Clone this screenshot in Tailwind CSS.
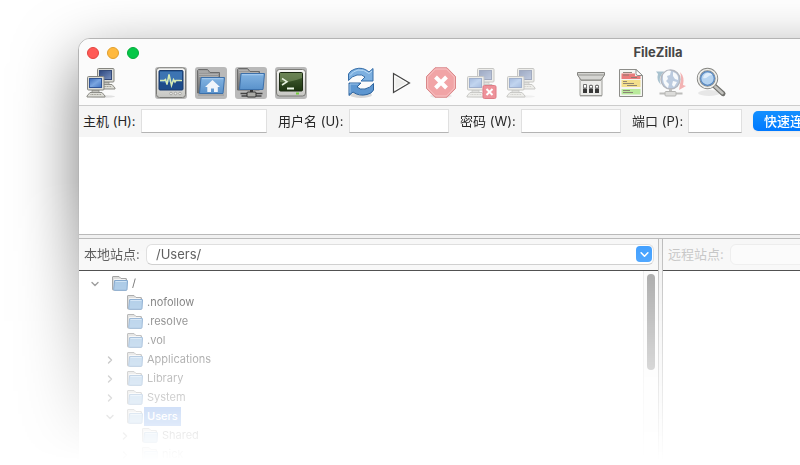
<!DOCTYPE html>
<html lang="zh-CN">
  <head>
    <meta charset="UTF-8" />
    <meta name="viewport" content="width=device-width, initial-scale=1.0" />
    <title>FileZilla</title>
    <script src="https://cdn.jsdelivr.net/npm/@tailwindcss/browser@4"></script>
  </head>

  <body class="bg-white font-['Inter','Noto_Sans_CJK_SC',sans-serif] text-[13px] text-[#262626]">
    <!-- ========== Shared icon parts ========== -->
    <svg class="absolute w-0 h-0" aria-hidden="true">
      <defs>
        <linearGradient id="screen" x1="0" y1="0" x2="1" y2="1">
          <stop offset="0" stop-color="#3a69b8" />
          <stop offset="0.5" stop-color="#7ba6e0" />
          <stop offset="1" stop-color="#3d70c0" />
        </linearGradient>
        <linearGradient id="screenDark" x1="0" y1="0" x2="1" y2="1">
          <stop offset="0" stop-color="#2d477e" />
          <stop offset="1" stop-color="#7890bf" />
        </linearGradient>
        <linearGradient id="blue" x1="0" y1="0" x2="0" y2="1">
          <stop offset="0" stop-color="#82b3e2" />
          <stop offset="1" stop-color="#5a92cb" />
        </linearGradient>
        <linearGradient id="frame" x1="0" y1="0" x2="0" y2="1">
          <stop offset="0" stop-color="#f8f8f6" />
          <stop offset="1" stop-color="#c6c6c2" />
        </linearGradient>
        <linearGradient id="green" x1="0" y1="0" x2="0" y2="1">
          <stop offset="0" stop-color="#4b6638" />
          <stop offset="1" stop-color="#1c3410" />
        </linearGradient>
        <linearGradient id="tabGray" x1="0" y1="0" x2="0" y2="1">
          <stop offset="0" stop-color="#a2a2a2" />
          <stop offset="1" stop-color="#6c6c6c" />
        </linearGradient>
      </defs>
      <symbol id="pc" viewBox="0 0 20 22">
        <path d="M4 16.500h12l3 3.500v1H1v-1z" fill="#deded8" stroke="#8b8b85" />
        <path d="M4.500 18.500h11" stroke="#99998f" stroke-width="1.200" stroke-dasharray="1 .6" />
        <path d="M6 14h7v2.500H6z" fill="#c4c4be" stroke="#85857f" stroke-width=".7" />
        <rect x="1.500" y=".5" width="16.500" height="13.500" rx="1" fill="#dcdcd6" stroke="#868680" />
      </symbol>
      <symbol id="pair" viewBox="0 0 32 32">
        <ellipse cx="17" cy="29.500" rx="13" ry="1.500" fill="#000" opacity=".1" />
        <use href="#pc" x="11" y="1" width="20" height="22" />
        <rect x="14.500" y="3.500" width="12" height="9" fill="url(#screenDark)" stroke="#354a78" />
        <use href="#pc" x="1" y="9" width="20" height="22" />
        <rect x="4.500" y="11.500" width="12" height="9" fill="url(#screen)" stroke="#315596" />
      </symbol>
      <symbol id="folder" viewBox="0 0 16 15">
        <path d="M.5 13.500V1q0-.5.5-.5h6l2 2h5q.5 0 .5.500v11H1q-.5 0-.5-.500z" fill="#c9c9c7" stroke="#757575" />
        <path d="M2 3.500h11" stroke="#f0f0f0" />
        <path d="M3 4.500h12.300q.3 0 .2.500l-.5 8.500q0 .8-1 .8H2.500q-1 0-.8-1L2.500 5q0-.5.500-.5z" fill="#7eaeda" stroke="#3e76b2" />
        <path d="M3.500 5.500h11" stroke="#b6d4ef" />
      </symbol>
      <symbol id="down" viewBox="0 0 8 8">
        <path d="M1 2.500 4 5.500 7 2.500" fill="none" stroke="currentColor" stroke-width="1.400" stroke-linecap="round" stroke-linejoin="round" />
      </symbol>
      <symbol id="right" viewBox="0 0 8 8">
        <path d="M2.500 1 5.500 4 2.500 7" fill="none" stroke="currentColor" stroke-width="1.400" stroke-linecap="round" stroke-linejoin="round" />
      </symbol>
    </svg>

    <div class="h-screen overflow-hidden pt-[38px] pl-[78px] mask-b-from-39% mask-b-to-99%">
      <div
        class="w-[145vw] h-screen flex flex-col rounded-tl-xl border border-[#b4b4b4] bg-white overflow-hidden shadow-[0_22px_62px_rgba(0,0,0,0.52)]"
      >
        <!-- ========== Title bar + toolbar ========== -->
        <header class="bg-[#fbfbfb] border-b border-[#cccccc]">
          <div class="grid grid-cols-3 items-center h-7 px-2">
            <div class="flex gap-2">
              <button aria-label="关闭" class="size-3 rounded-full bg-[#ff5a56] border border-[#e2443f]"></button>
              <button aria-label="最小化" class="size-3 rounded-full bg-[#ffb93e] border border-[#e09f2c]"></button>
              <button aria-label="缩放" class="size-3 rounded-full bg-[#05c748] border border-[#04aa3b]"></button>
            </div>
            <h1 class="text-center text-[13px] font-bold text-[#464646]">FileZilla</h1>
          </div>

          <div class="flex gap-[30px] px-[6px] pb-[6px]">
            <button aria-label="站点管理器" class="size-8">
              <svg viewBox="0 0 32 32"><use href="#pair" /></svg>
            </button>

            <!-- View toggles -->
            <div class="flex gap-2 ml-2">
              <button aria-label="消息日志" class="size-8">
                <svg viewBox="0 0 32 32">
                  <rect width="32" height="32" rx="3" fill="#b9b9b9" />
                  <rect x="1.500" y=".8" width="29" height="29.700" rx="3" fill="url(#frame)" stroke="#7a7a76" />
                  <rect x="4" y="3.500" width="24" height="19.500" rx="1" fill="#1d4c8a" stroke="#1a3b6c" />
                  <path d="M5 4.500h22V12Q16 17 5 15z" fill="#4f8bc8" opacity=".65" />
                  <path d="M5 13.500h4l1.500-1 1.500 5 2-10 2.500 11 2-6 1.500 2.500 1-1.500H27" fill="none" stroke="#d5ebb4" stroke-width="1.500" />
                  <g fill="#eee" stroke="#9a9a96" stroke-width=".8">
                    <circle cx="16" cy="26.500" r="1.300" /><circle cx="20.500" cy="26.500" r="1.300" /><circle cx="25" cy="26.500" r="1.300" />
                  </g>
                </svg>
              </button>
              <button aria-label="本地目录树" class="size-8">
                <svg viewBox="0 0 32 32">
                  <rect width="32" height="32" rx="3" fill="#b9b9b9" />
                  <path d="M2.500 26V3.500l1-1h9l2.500 3h9.500V26z" fill="url(#tabGray)" stroke="#6b6b6b" />
                  <path d="M4 5h9M4 7.500h19M4 9.500h19" stroke="#bababa" stroke-width=".7" />
                  <path d="M6 10.500h23.500L28 26.500H4.500z" fill="url(#blue)" stroke="#3c70aa" stroke-linejoin="round" />
                  <path d="M7 11.700h21" stroke="#a9cdf0" />
                  <path d="M3 28h26" stroke="#777" opacity=".5" />
                  <path d="M17.500 13 25 20h-2.200v5H19v-3.500h-3V25h-3.700v-5H10z" fill="#f0f5fb" />
                </svg>
              </button>
              <button aria-label="远程目录树" class="size-8">
                <svg viewBox="0 0 32 32">
                  <rect width="32" height="32" rx="3" fill="#b9b9b9" />
                  <path d="M2.500 23V2.500l1-1h9l2.500 3h9.500V23z" fill="url(#tabGray)" stroke="#6b6b6b" />
                  <path d="M4 3.500h9M4 5.500h19" stroke="#bababa" stroke-width=".7" />
                  <path d="M6 6.500h23.500L28 22.500H4.500z" fill="url(#blue)" stroke="#3c70aa" stroke-linejoin="round" />
                  <path d="M7 7.700h21" stroke="#a9cdf0" />
                  <path d="M16.500 23v2" stroke="#333" stroke-width="3" />
                  <path d="M5.500 26.500h22M6.500 29h20" stroke="#444" stroke-width="1.300" />
                  <rect x="12" y="25" width="9" height="5" rx="1" fill="#a9a9a5" stroke="#333" />
                </svg>
              </button>
              <button aria-label="传输队列" class="size-8">
                <svg viewBox="0 0 32 32">
                  <rect width="32" height="32" rx="3" fill="#b9b9b9" />
                  <rect x="1.500" y="2.500" width="29" height="26.500" rx="3" fill="url(#frame)" stroke="#7a7a76" />
                  <rect x="4.500" y="5.500" width="23" height="18.500" rx="1" fill="url(#green)" stroke="#1b2913" />
                  <path d="M5 6h22v5Q15 16 5 15z" fill="#8ba471" opacity=".5" />
                  <path d="m7 11.500 5 3.200L7 18" fill="none" stroke="#e4f0dc" stroke-width="1.500" />
                  <path d="M12 21.500h7" stroke="#f0faea" stroke-width="1.800" />
                  <path d="M21 26.500h3" stroke="#71ce3c" stroke-width="2" />
                </svg>
              </button>
            </div>

            <!-- Transfer actions -->
            <div class="flex gap-2 ml-2">
              <button aria-label="刷新" class="size-8">
                <svg viewBox="0 0 32 32">
                  <ellipse cx="16" cy="28" rx="11" ry="3" fill="#000" opacity=".14" />
                  <g stroke="#336a a4" stroke-linejoin="round">
                    <path d="M3.500 13.500V7Q5 3.500 10 2q8-2.500 14 3l4-3.500V14H16l4-4q-3-3-8-2-5 1-8.500 5.500z" fill="#7db0e0" stroke="#356da8" />
                    <path d="M28.500 16.500V23q-1.500 3.500-6.500 4.500-8 2-14-2.500l-4 3.500V16H16l-4 4q3 3 8 2 5-1 8.500-5.500z" fill="#5d96d0" stroke="#2d639d" />
                  </g>
                  <path d="M5 8.500Q8 4 13 3q6-.8 11 3.500l3-2.500" fill="none" stroke="#b9daf5" />
                  <path d="M5 26v-9h8.500" fill="none" stroke="#9cc4ea" />
                </svg>
              </button>
              <button aria-label="处理队列" class="size-8">
                <svg viewBox="0 0 32 32">
                  <path d="M8.500 6.500v19L24.500 16z" fill="#eeeeec" stroke="#454545" stroke-width="1.200" />
                  <path d="M9.800 9v14L21.800 16z" fill="none" stroke="#fff" />
                </svg>
              </button>
              <button aria-label="取消" disabled class="size-8">
                <svg viewBox="0 0 32 32">
                  <ellipse cx="16" cy="29" rx="11" ry="2" fill="#000" opacity=".07" />
                  <path d="M10 .8h12l8.500 8.700v12L22 30.200H10L1.500 21.500v-12z" fill="#f1a4a6" stroke="#d98789" />
                  <path d="M10.500 2h11l7.800 8v11l-7.800 8h-11L2.700 21V10z" fill="none" stroke="#f8c5c6" />
                  <path d="m10.500 10 11 11m0-11-11 11" stroke="#fff" stroke-width="4" />
                </svg>
              </button>
              <button aria-label="断开连接" disabled class="size-8">
                <svg viewBox="0 0 32 32">
                  <g opacity=".45"><use href="#pair" /></g>
                  <rect x="18" y="18.500" width="13" height="13" rx="1.500" fill="#ee929a" stroke="#df7d86" />
                  <path d="m21.500 22 6 6m0-6-6 6" stroke="#fff" stroke-width="2" />
                </svg>
              </button>
              <button aria-label="重新连接" disabled class="size-8">
                <svg viewBox="0 0 32 32"><g opacity=".45"><use href="#pair" /></g></svg>
              </button>
            </div>

            <!-- Listing tools -->
            <div class="flex gap-2 ml-2">
              <button aria-label="过滤器" class="size-8">
                <svg viewBox="0 0 32 32">
                  <path d="M5 9h22v19.500H5z" fill="#ececea" stroke="#9a9a96" />
                  <path d="M2.500 5.500h27v2.500l-3.500 5H6L2.500 8z" fill="#d5d5d2" stroke="#858581" />
                  <path d="M3 8h26M6 13.500h20" stroke="#959591" />
                  <path d="M10 17v9M16 17v9M22 17v9" stroke="#aaa" />
                  <path d="M8 21.500h4V26H8zM14 21.500h4V26h-4zM20 21.500h4V26h-4z" fill="#383838" />
                  <path d="M8.500 17.500h3v3.500h-3zM14.500 18.500h3V21h-3zM20.500 18.500h3V21h-3z" fill="#fff" stroke="#555" stroke-width=".8" />
                  <path d="M5 29.500h22" stroke="#000" opacity=".15" />
                </svg>
              </button>
              <button aria-label="目录对比" class="size-8">
                <svg viewBox="0 0 32 32">
                  <path d="M4.500 2.500H21l6.500 6v21h-23z" fill="#f5f5f2" stroke="#8d8d89" />
                  <path d="M6.500 6.500H20V9h5.500v3h-19z" fill="#ea7b7b" />
                  <path d="M6.500 13h19v7h-19z" fill="#f3df8c" />
                  <path d="M6.500 22h19v5.500h-19z" fill="#b9ea9b" />
                  <path d="M21 2.500v4q0 2 2 2h4.500z" fill="#fff" stroke="#8d8d89" />
                  <path d="M8 5.500h9M8 8h6M16 10.500h6M8 14.500h4M8 16.500h11M12 18.500h10M8 23.500h7M8 25.500h10" stroke="#857a70" stroke-width=".9" />
                </svg>
              </button>
              <button aria-label="同步浏览" disabled class="size-8">
                <svg viewBox="0 0 32 32">
                  <path d="M1 4.500h8L7 7q-4 5-1 11-5-5-3-11z" fill="#a9c2cf" />
                  <path d="M25 5q5 5 3 13l3 1-7 4 1-6q2-6 0-12z" fill="#f3b3b3" />
                  <circle cx="15.500" cy="12.500" r="9.500" fill="#bccbdf" stroke="#b4b7bf" stroke-width="1.400" />
                  <path d="M8 8q4-6 8-4l-1 4-3 1 1 3-2 2 3 3-1 4q-6-4-5-13zM18 5q6 2 5 8l-3-1-2-3zM18 14l4 1-3 5-2-2z" fill="#f8fafc" />
                  <path d="M15.500 22v4" stroke="#c0c0be" stroke-width="3" />
                  <path d="M4.500 26.500h23" stroke="#bdbdbb" stroke-width="2" />
                  <rect x="10" y="24.500" width="11" height="4.500" rx="1" fill="#dcdcda" stroke="#b4b4b2" />
                </svg>
              </button>
              <button aria-label="搜索文件" class="size-8">
                <svg viewBox="0 0 32 32">
                  <ellipse cx="14" cy="26" rx="11" ry="3" fill="#000" opacity=".08" />
                  <path d="m19 18.500 9 8.200" stroke="#70706c" stroke-width="5" stroke-linecap="round" />
                  <path d="m19.500 19 8 7.200" stroke="#c3c3bf" stroke-width="2.500" stroke-linecap="round" />
                  <circle cx="12.500" cy="11.500" r="9" fill="#b5d3f0" stroke="#888884" stroke-width="3.400" />
                  <circle cx="12.500" cy="11.500" r="9" fill="none" stroke="#eeeeeb" stroke-width="1.700" />
                  <circle cx="12.500" cy="11.500" r="6.800" fill="none" stroke="#5a89c0" stroke-width="1.300" />
                  <path d="M8 11q1-5 5.500-5 3 0 4 2-3 0-5 2t-4.500 1z" fill="#dfedfa" />
                </svg>
              </button>
            </div>
          </div>
        </header>

        <!-- ========== Quick connect ========== -->
        <form class="flex items-center h-[31px] pl-1 pb-px bg-[#f5f5f5] whitespace-nowrap">
          <label for="host" class="w-[58px] pt-px">主机 (H):</label>
          <input id="host" type="text" class="w-[126px] h-6 mr-[11px] px-1 bg-white border border-[#e0e0e0] border-b-[#b4b4b4]" />
          <label for="user" class="w-[71px] pt-px">用户名 (U):</label>
          <input id="user" type="text" class="w-[100px] h-6 mr-[11px] px-1 bg-white border border-[#e0e0e0] border-b-[#b4b4b4]" />
          <label for="pass" class="w-[61px] pt-px">密码 (W):</label>
          <input id="pass" type="password" class="w-[100px] h-6 mr-[11px] px-1 bg-white border border-[#e0e0e0] border-b-[#b4b4b4]" />
          <label for="port" class="w-[56px] pt-px">端口 (P):</label>
          <input id="port" type="text" class="w-[54px] h-6 mr-[11px] px-1 bg-white border border-[#e0e0e0] border-b-[#b4b4b4]" />
          <button type="button" class="h-5 px-[11px] rounded-[5px] bg-linear-to-b from-[#1490ff] to-[#0078ff] text-white font-medium leading-[18px] shadow-xs">快速连接</button>
        </form>

        <!-- ========== Message log ========== -->
        <div class="h-[97px] shrink-0 bg-white"></div>
        <div class="h-[5px] shrink-0 bg-[#eeeeee] border-y border-[#aaaaaa]"></div>

        <div class="flex flex-1 min-h-0">
          <!-- ========== Local site ========== -->
          <section class="flex flex-col w-1/2 shrink-0">
            <div class="flex items-center h-8 pl-[5px] pr-1 bg-[#f5f5f5] border-b border-black whitespace-nowrap">
              <label for="local" class="w-[62px]">本地站点:</label>
              <div class="relative flex-1">
                <select id="local" class="block w-full h-[21px] pl-[9px] appearance-none bg-white border border-[#d5d5d5] border-b-[#bcbcbc] rounded-md leading-[19px]">
                  <option>/Users/</option>
                </select>
                <span class="absolute right-[2px] top-[2px] size-4 rounded bg-[#0a84ff] text-white pointer-events-none flex items-center justify-center">
                  <svg class="size-[9px]"><use href="#down" /></svg>
                </span>
              </div>
            </div>

            <div class="flex flex-1 min-h-0">
              <ul class="flex-1 pt-[3px] overflow-hidden text-[11px] leading-[19px]">
                <li class="flex items-center pl-3">
                  <svg class="size-2 mr-[13px] text-[#666666]"><use href="#down" /></svg>
                  <svg class="w-4 h-[15px] mr-1 mb-px"><use href="#folder" /></svg>/
                </li>
                <li class="flex items-center pl-12">
                  <svg class="w-4 h-[15px] mr-1 mb-px"><use href="#folder" /></svg>.nofollow
                </li>
                <li class="flex items-center pl-12">
                  <svg class="w-4 h-[15px] mr-1 mb-px"><use href="#folder" /></svg>.resolve
                </li>
                <li class="flex items-center pl-12">
                  <svg class="w-4 h-[15px] mr-1 mb-px"><use href="#folder" /></svg>.vol
                </li>
                <li class="flex items-center pl-[27px]">
                  <svg class="size-2 mr-[13px] text-[#666666]"><use href="#right" /></svg>
                  <svg class="w-4 h-[15px] mr-1 mb-px"><use href="#folder" /></svg>Applications
                </li>
                <li class="flex items-center pl-[27px]">
                  <svg class="size-2 mr-[13px] text-[#666666]"><use href="#right" /></svg>
                  <svg class="w-4 h-[15px] mr-1 mb-px"><use href="#folder" /></svg>Library
                </li>
                <li class="flex items-center pl-[27px]">
                  <svg class="size-2 mr-[13px] text-[#666666]"><use href="#right" /></svg>
                  <svg class="w-4 h-[15px] mr-1 mb-px"><use href="#folder" /></svg>System
                </li>
                <li class="flex items-center pl-[27px]">
                  <svg class="size-2 mr-[13px] text-[#666666]"><use href="#down" /></svg>
                  <svg class="w-4 h-[15px] mr-px mb-px"><use href="#folder" /></svg>
                  <span class="px-[3px] bg-[#0a5bd8] text-white font-medium">Users</span>
                </li>
                <li class="flex items-center pl-[42px]">
                  <svg class="size-2 mr-[13px] text-[#666666]"><use href="#right" /></svg>
                  <svg class="w-4 h-[15px] mr-1 mb-px"><use href="#folder" /></svg>Shared
                </li>
                <li class="flex items-center pl-[42px]">
                  <svg class="size-2 mr-[13px] text-[#666666]"><use href="#right" /></svg>
                  <svg class="w-4 h-[15px] mr-1 mb-px"><use href="#folder" /></svg>nick
                </li>
              </ul>
              <div class="w-[15px] pt-[3px] pl-[3px] bg-[#fafafa] border-l border-[#e4e4e4]">
                <div class="w-2 h-24 rounded-full bg-[#868686]"></div>
              </div>
            </div>
          </section>

          <div class="w-[5px] bg-[#eeeeee] border-x border-[#aaaaaa]"></div>

          <!-- ========== Remote site ========== -->
          <section class="flex flex-col flex-1 min-w-0">
            <div class="flex items-center h-8 pl-[5px] pr-1 bg-[#f5f5f5] border-b border-black whitespace-nowrap">
              <label for="remote" class="w-[62px] text-[#b4b4b4]">远程站点:</label>
              <select id="remote" disabled class="flex-1 h-[21px] appearance-none bg-[#fafafa] border border-[#e8e8e8] rounded-md"></select>
            </div>
            <div class="flex-1 bg-white"></div>
          </section>
        </div>
      </div>
    </div>
  </body>
</html>
